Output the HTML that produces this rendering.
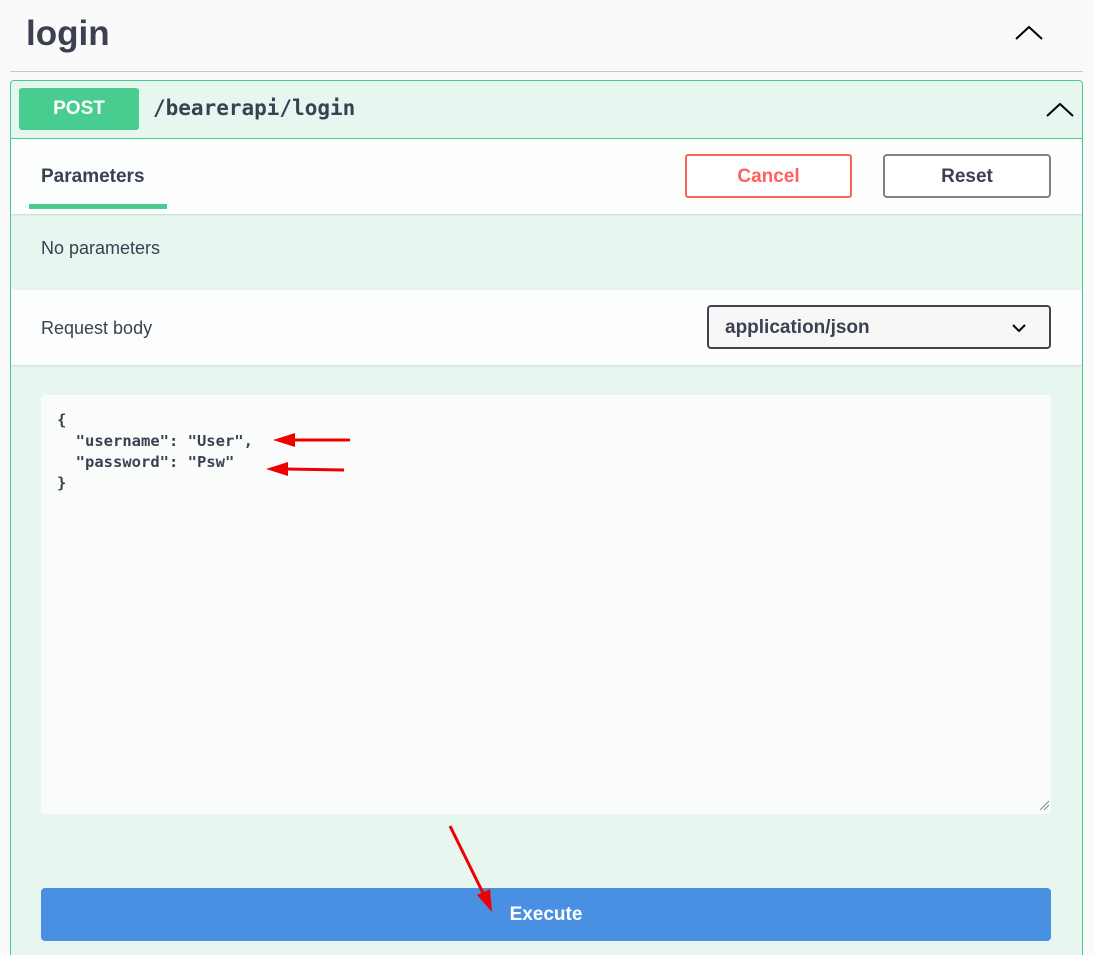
<!DOCTYPE html>
<html><head><style>
html,body{margin:0;width:1094px;height:955px;overflow:hidden}
body{background:#fafafa;position:relative;font-family:"Liberation Sans",sans-serif;color:#3b4151}
.a{position:absolute}
</style></head><body>
<div class="a" style="left:26px;top:14px;font-size:35px;font-weight:bold;">login</div>
<svg class="a" style="left:1014px;top:24px" width="30" height="18"><path d="M2 15 L15 3 L28 15" fill="none" stroke="#000" stroke-width="2"/></svg>
<div class="a" style="left:10px;top:71px;width:1073px;height:1px;background:#c8c8c8"></div>
<div class="a" style="left:10px;top:80px;width:1071px;height:900px;border:1px solid #49cc90;border-radius:4px;background:#e8f6f0"></div>
<div class="a" style="left:11px;top:138px;width:1071px;height:1px;background:#49cc90"></div>
<div class="a" style="left:19px;top:88px;width:120px;height:42px;background:#49cc90;border-radius:3px;color:#fff;font-weight:bold;font-size:19px;text-align:center;line-height:42px;">POST</div>
<div class="a" style="left:153px;top:96px;font-family:'DejaVu Sans Mono',monospace;font-weight:bold;font-size:21px;">/bearerapi/login</div>
<svg class="a" style="left:1045px;top:101px" width="30" height="18"><path d="M2 15 L15 3 L28 15" fill="none" stroke="#000" stroke-width="2"/></svg>
<div class="a" style="left:11px;top:139px;width:1071px;height:75px;background:#fcfdfd;box-shadow:0 1px 2px rgba(0,0,0,.12)"></div>
<div class="a" style="left:41px;top:166px;font-size:19px;font-weight:bold;">Parameters</div>
<div class="a" style="left:29px;top:204px;width:138px;height:5px;background:#49cc90"></div>
<div class="a" style="left:685px;top:154px;width:163px;height:40px;border:2px solid #ff6060;border-radius:3px;color:#ff6060;font-weight:bold;font-size:19px;text-align:center;line-height:42px;background:#fff">Cancel</div>
<div class="a" style="left:883px;top:154px;width:164px;height:40px;border:2px solid #808080;border-radius:4px;font-weight:bold;font-size:19px;text-align:center;line-height:42px;background:#fff">Reset</div>
<div class="a" style="left:41px;top:238px;font-size:18px;">No parameters</div>
<div class="a" style="left:11px;top:290px;width:1071px;height:75px;background:#fcfdfd;box-shadow:0 1px 2px rgba(0,0,0,.12)"></div>
<div class="a" style="left:41px;top:318px;font-size:18px;">Request body</div>
<div class="a" style="left:707px;top:305px;width:340px;height:40px;border:2px solid #41444e;border-radius:4px;background:#f7f7f7;"></div>
<div class="a" style="left:725px;top:317px;font-size:19px;font-weight:bold;">application/json</div>
<svg class="a" style="left:1011px;top:322px" width="16" height="12"><path d="M2 3 L8 9 L14 3" fill="none" stroke="#000" stroke-width="2"/></svg>
<div class="a" style="left:41px;top:395px;width:1010px;height:419px;background:#fafcfb;border-radius:4px"></div>
<pre class="a" style="margin:0;left:57px;top:410px;font-family:'DejaVu Sans Mono',monospace;font-size:15.5px;line-height:21px;font-weight:bold;color:#3b4151">{
  "username": "User",
  "password": "Psw"
}</pre>
<div class="a" style="left:41px;top:888px;width:1010px;height:53px;background:#4990e2;border-radius:4px;color:#fff;font-weight:bold;font-size:19px;text-align:center;line-height:54px;">Execute</div>
<svg class="a" style="left:0;top:0" width="1094" height="955">
<g stroke="#e00" stroke-width="3" fill="#e00">
<line x1="290" y1="440" x2="350" y2="440"/><path d="M273 440 L295 433 L295 447Z" stroke="none"/>
<line x1="285" y1="469" x2="344" y2="470"/><path d="M266 469 L288 462 L288 476Z" stroke="none"/>
<line x1="450" y1="826" x2="484" y2="895"/><path d="M492 912 L477 895 L490 889Z" stroke="none"/>
</g>
<path d="M1040 810 L1049 801 M1044 810 L1049 805" stroke="#888" stroke-width="1"/>
</svg>
</body></html>
